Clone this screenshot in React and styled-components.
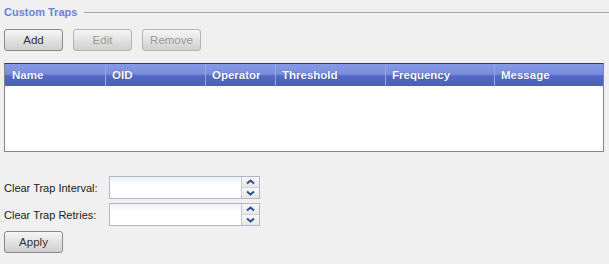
import React from "react";
import styled, { createGlobalStyle } from "styled-components";

const Global = createGlobalStyle`
  html, body { margin: 0; padding: 0; background: #f0f0f0; }
  body { font-family: "Liberation Sans", Arial, sans-serif; font-size: 12px; color: #222; }
`;

const Page = styled.div`
  width: 609px;
  height: 264px;
  box-sizing: border-box;
  padding: 4px 6px 0 4px;
  display: flex;
  flex-direction: column;
`;

const SectionHead = styled.div`
  display: flex;
  align-items: center;
  height: 16px;
  gap: 7px;
`;

const SectionTitle = styled.span`
  font-weight: bold;
  font-size: 11px;
  color: #6b80dc;
  white-space: nowrap;
`;

const SectionLine = styled.div`
  flex: 1;
  height: 1px;
  background: #a8a8a8;
  margin-right: -6px;
`;

const Toolbar = styled.div`
  display: flex;
  gap: 10px;
  margin-top: 9px;
`;

const Button = styled.button`
  width: 59px;
  height: 22px;
  box-sizing: border-box;
  padding: 0;
  border: 1px solid ${(p) => (p.disabled ? "#b4b4b4" : "#8a8a8a")};
  border-radius: 3px;
  background: linear-gradient(#f6f6f6, #cfcfcf);
  font-family: "Liberation Sans", Arial, sans-serif;
  font-size: 11.5px;
  color: ${(p) => (p.disabled ? "#9a9a9a" : "#333")};
`;

const Table = styled.div`
  margin-top: 12px;
  width: 600px;
  height: 89px;
  box-sizing: border-box;
  border: 1px solid #858585;
  border-top: 1px solid #2a3c82;
  background: #fff;
  display: flex;
  flex-direction: column;
`;

const HeaderRow = styled.div`
  display: grid;
  grid-template-columns: 100px 100px 70px 110px 109px 109px;
  height: 22px;
  background: linear-gradient(#8699e4 0%, #7b8edd 45%, #5568c3 55%, #4a5fbb 100%);
`;

const HeaderCell = styled.div`
  box-sizing: border-box;
  display: flex;
  align-items: center;
  padding-left: ${(p) => (p.$first ? 7 : 6)}px;
  border-left: ${(p) => (p.$first ? "none" : "1px solid #97a6e6")};
  color: #fff;
  font-weight: bold;
  font-size: 11.5px;
  text-shadow: 0 0 1px #2a3a90;
`;

const Form = styled.div`
  margin-top: 24px;
  display: flex;
  flex-direction: column;
  gap: 4px;
`;

const FieldRow = styled.div`
  display: flex;
  align-items: center;
`;

const Label = styled.label`
  width: 105px;
  font-size: 11px;
  color: #222;
`;

const Spinner = styled.div`
  display: flex;
  width: 151px;
  height: 23px;
  box-sizing: border-box;
  border: 1px solid #b4b7cc;
  background: #fff;
`;

const SpinInput = styled.input`
  flex: 1;
  min-width: 0;
  border: none;
  outline: none;
  padding: 0 3px;
  background: linear-gradient(#eef3f3, #fff 40%);
  font-family: "Liberation Sans", Arial, sans-serif;
  font-size: 12px;
`;

const SpinButtons = styled.div`
  width: 17px;
  display: flex;
  flex-direction: column;
  border-left: 1px solid #c4c7d6;
`;

const SpinBtn = styled.div`
  flex: 1;
  display: flex;
  align-items: center;
  justify-content: center;
  background: linear-gradient(#f8f8f8, #e6e6e6);
  border-top: ${(p) => (p.$down ? "1px solid #d0d2dc" : "none")};
`;

const ApplyWrap = styled.div`
  margin-top: 1px;
`;

const Chevron = ({ down }) => (
  <svg width="9" height="6" viewBox="0 0 9 6">
    <path
      d={down ? "M1 1.5 L4.5 4.5 L8 1.5" : "M1 4.5 L4.5 1.5 L8 4.5"}
      fill="none"
      stroke="#2d4d8e"
      strokeWidth="2"
    />
  </svg>
);

const SpinField = ({ label }) => (
  <FieldRow>
    <Label>{label}</Label>
    <Spinner>
      <SpinInput />
      <SpinButtons>
        <SpinBtn>
          <Chevron />
        </SpinBtn>
        <SpinBtn $down>
          <Chevron down />
        </SpinBtn>
      </SpinButtons>
    </Spinner>
  </FieldRow>
);

const columns = ["Name", "OID", "Operator", "Threshold", "Frequency", "Message"];

export default function App() {
  return (
    <>
      <Global />
      <Page>
        <SectionHead>
          <SectionTitle>Custom Traps</SectionTitle>
          <SectionLine />
        </SectionHead>
        <Toolbar>
          <Button>Add</Button>
          <Button disabled>Edit</Button>
          <Button disabled>Remove</Button>
        </Toolbar>
        <Table>
          <HeaderRow>
            {columns.map((c, i) => (
              <HeaderCell key={c} $first={i === 0}>
                {c}
              </HeaderCell>
            ))}
          </HeaderRow>
        </Table>
        <Form>
          <SpinField label="Clear Trap Interval:" />
          <SpinField label="Clear Trap Retries:" />
          <ApplyWrap>
            <Button>Apply</Button>
          </ApplyWrap>
        </Form>
      </Page>
    </>
  );
}
